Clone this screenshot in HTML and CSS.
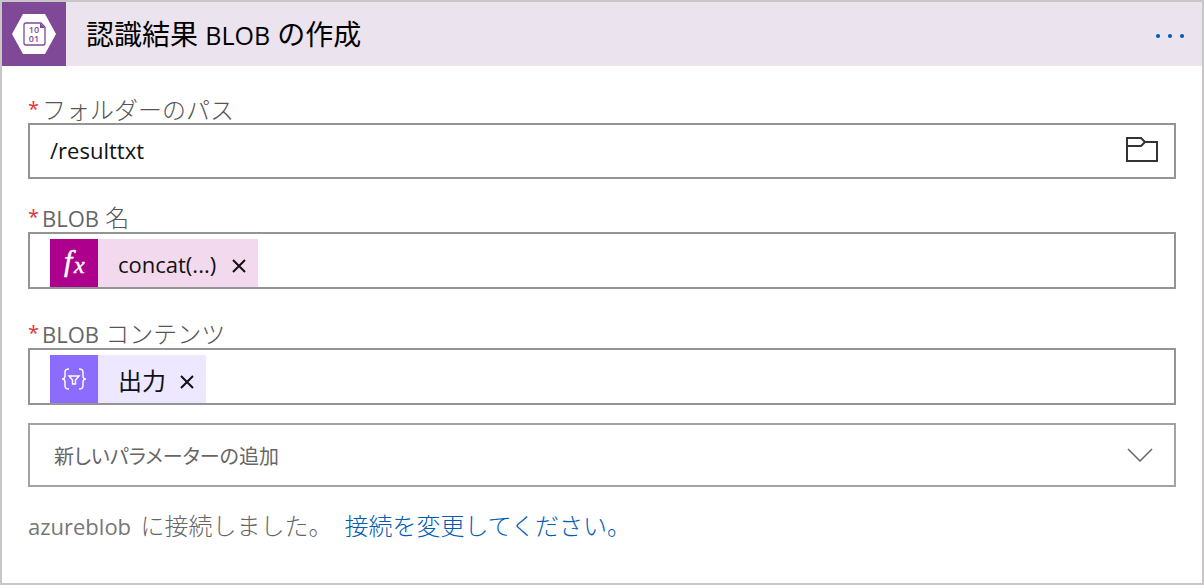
FILE: index.html
```html
<!DOCTYPE html>
<html lang="ja">
<head>
<meta charset="utf-8">
<meta name="viewport" content="width=device-width, initial-scale=1">
<title>認識結果 BLOB の作成</title>
<link rel="stylesheet" href="styles.css">
</head>
<body>
<main class="card">
  <header class="card-header">
    <div class="card-icon">
      <svg width="64" height="64" viewBox="0 0 64 64" aria-hidden="true">
        <path d="M21 12h22l11 20-11 20H21L10 32z" fill="#fff"/>
        <path d="M24 21h15l4 4v16a2 2 0 0 1-2 2H24a2 2 0 0 1-2-2V23a2 2 0 0 1 2-2z" fill="none" stroke="#804998" stroke-width="1.3"/>
        <path d="M38 21v5h5z" fill="#804998"/>
        <text class="bits"><tspan x="32" y="31">10</tspan><tspan x="32" y="40">01</tspan></text>
      </svg>
    </div>
    <h1 class="card-title">認識結果 <span class="latin">BLOB</span> の作成</h1>
    <button class="menu-button" type="button" aria-label="メニュー">
      <svg width="30" height="6" viewBox="0 0 30 6" fill="#015cb3" aria-hidden="true">
        <circle cx="3" cy="3" r="2.1"/><circle cx="15" cy="3" r="2.1"/><circle cx="27" cy="3" r="2.1"/>
      </svg>
    </button>
  </header>

  <form class="card-body">
    <div class="field">
      <label class="label" for="folder"><span class="required">*</span><span>フォルダーのパス</span></label>
      <div class="box">
        <input class="text-input" id="folder" type="text" value="/resulttxt">
        <button class="folder-button" type="button" aria-label="フォルダーを選択">
          <svg width="34" height="28" viewBox="0 0 34 28" fill="none" stroke="#333" stroke-width="2" aria-hidden="true">
            <path d="M2 24V1h14l4 4h12v19zM2 9h14l4-4"/>
          </svg>
        </button>
      </div>
    </div>

    <div class="field">
      <label class="label" for="blob-name"><span class="required">*</span><span><span class="latin">BLOB</span> 名</span></label>
      <div class="box token-box">
        <div class="token token-expression">
          <span class="token-icon">
            <svg width="48" height="48" viewBox="0 0 48 48" aria-hidden="true">
              <text class="fx"><tspan x="14" y="32">f</tspan><tspan class="fx-small" x="24" y="34">x</tspan></text>
            </svg>
          </span>
          <span class="token-text latin">concat(...)</span>
          <button class="token-remove" type="button" aria-label="concat(...) を削除">
            <svg width="14" height="14" viewBox="0 0 14 14" stroke="#111" stroke-width="2" aria-hidden="true"><path d="M1 1l12 12M13 1L1 13"/></svg>
          </button>
        </div>
        <input class="token-input" id="blob-name" type="text">
      </div>
    </div>

    <div class="field field-content">
      <label class="label" for="blob-content"><span class="required">*</span><span><span class="latin">BLOB</span> コンテンツ</span></label>
      <div class="box token-box">
        <div class="token token-output">
          <span class="token-icon">
            <svg width="48" height="48" viewBox="0 0 48 48" fill="none" stroke="#fff" stroke-width="1.4" aria-hidden="true">
              <path d="M19 14c-3 0-4 1-4 3v4c0 2-1 3-3 3 2 0 3 1 3 3v4c0 2 1 3 4 3M29 14c3 0 4 1 4 3v4c0 2 1 3 3 3-2 0-3 1-3 3v4c0 2-1 3-4 3"/>
              <path d="M19 21h10l-3.500 4v4h-3v-4z"/>
            </svg>
          </span>
          <span class="token-text">出力</span>
          <button class="token-remove" type="button" aria-label="出力 を削除">
            <svg width="14" height="14" viewBox="0 0 14 14" stroke="#111" stroke-width="2" aria-hidden="true"><path d="M1 1l12 12M13 1L1 13"/></svg>
          </button>
        </div>
        <input class="token-input" id="blob-content" type="text">
      </div>
    </div>

    <div class="select-box">
      <select class="select" aria-label="新しいパラメーターの追加">
        <option>新しいパラメーターの追加</option>
      </select>
      <svg class="chevron" width="26" height="14" viewBox="0 0 26 14" fill="none" stroke="#666" stroke-width="1.5" aria-hidden="true"><path d="M1 1l12 12L25 1"/></svg>
    </div>

    <p class="connection"><span><span class="latin">azureblob</span> に接続しました。</span><a class="link" href="#">接続を変更してください。</a></p>
  </form>
</main>
</body>
</html>
```

FILE: styles.css
```css
* {
  box-sizing: border-box;
}

body {
  margin: 0;
  font-family: "Noto Sans CJK JP", sans-serif;
  font-size: 24px;
  font-weight: 300;
  color: #111;
  background: #fff;
}

button,
input,
select {
  margin: 0;
  padding: 0;
  border: 0;
  background: none;
  font: inherit;
  color: inherit;
}

button {
  display: flex;
  cursor: pointer;
}

.latin {
  font-family: "Open Sans", sans-serif;
  font-size: 22px;
  font-weight: 400;
}

.card {
  min-height: 100vh;
  border: 2px solid #c8c6c6;
}

.card-header {
  display: flex;
  align-items: center;
  height: 64px;
  padding-right: 17px;
  background: #ebe4ef;
}

.card-icon {
  display: flex;
  background: #804998;
}

.bits {
  font: 600 9px "Open Sans", sans-serif;
  fill: #804998;
  text-anchor: middle;
}

.card-title {
  flex: 1;
  margin: 0;
  padding-left: 20px;
  font-size: 28px;
  font-weight: 400;
  line-height: 40px;
  color: #000;
}

.card-title .latin {
  margin: 0 1px;
  font-size: 25px;
}

.menu-button {
  padding-top: 4px;
}

.card-body {
  padding: 29px 26px;
}

.field {
  margin-bottom: 24px;
}

.field-content {
  margin: 30px 0 18px;
}

.label {
  display: flex;
  gap: 4px;
  line-height: 28px;
  color: #555;
}

.label .latin {
  margin-right: 1px;
  color: #666;
}

.required {
  width: 10px;
  font-family: "Open Sans", sans-serif;
  font-size: 20px;
  font-weight: 400;
  color: #e8303c;
}

.box {
  display: flex;
  align-items: center;
  min-height: 56px;
  border: 2px solid #949494;
}

.text-input {
  flex: 1;
  min-width: 0;
  height: 52px;
  padding: 0 0 2px 20px;
  font-family: "Open Sans", sans-serif;
  font-size: 22px;
  font-weight: 400;
}

.folder-button {
  margin-right: 15px;
}

.token-box {
  padding: 5px 20px 0;
}

.token {
  display: flex;
  align-items: center;
  height: 48px;
  padding-right: 12px;
}

.token-expression {
  background: #f2d9ee;
}

.token-output {
  background: #ede8ff;
}

.token-icon {
  display: flex;
  margin-right: 20px;
}

.token-expression .token-icon {
  background: #ad008c;
}

.token-output .token-icon {
  background: #8c6cff;
}

.token-text {
  font-weight: 400;
}

.token-text.latin {
  padding: 2px 2px 0 0;
}

.fx {
  font: italic 30px "Liberation Serif", serif;
  fill: #fff;
  stroke: #fff;
  stroke-width: 0.5px;
}

.fx-small {
  font-size: 24px;
}

.token-remove {
  padding-top: 6px;
  margin-left: 14px;
}

.token-input {
  flex: 1;
  min-width: 0;
  height: 48px;
}

.select-box {
  display: grid;
  align-items: center;
  border: 2px solid #a3a3a3;
}

.select {
  grid-area: 1 / 1;
  width: 100%;
  height: 60px;
  padding-left: 24px;
  appearance: none;
  font-size: 20px;
  font-weight: 400;
  font-feature-settings: "palt";
  color: #666;
}

.chevron {
  grid-area: 1 / 1;
  justify-self: end;
  margin-right: 21px;
  pointer-events: none;
}

.connection {
  display: flex;
  flex-wrap: wrap;
  gap: 12px;
  margin: 20px 0 0;
  line-height: 36px;
  color: #666;
}

.connection .latin {
  margin-right: 4px;
  color: #777;
}

.link {
  color: #015cb3;
  text-decoration: none;
}
```
